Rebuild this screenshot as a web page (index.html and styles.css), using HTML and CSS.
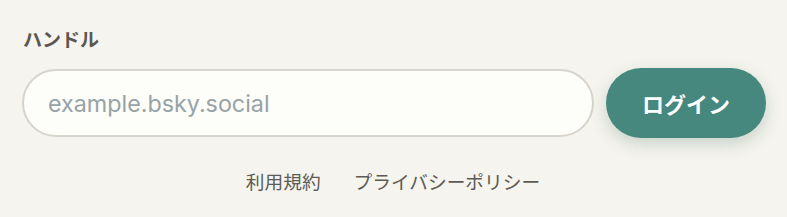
FILE: index.html
```html
<!DOCTYPE html>
<html lang="ja">
<head>
<meta charset="utf-8">
<link rel="stylesheet" href="styles.css">
</head>
<body>
<div class="wrap">
  <label class="label" for="handle">ハンドル</label>
  <div class="row">
    <input id="handle" class="input" type="text" placeholder="example.bsky.social">
    <button class="btn">ログイン</button>
  </div>
  <div class="links">
    <a href="#">利用規約</a>
    <a href="#">プライバシーポリシー</a>
  </div>
</div>
</body>
</html>
```
FILE: styles.css
```css
html, body {
  margin: 0;
  padding: 0;
  background: #f5f4ee;
}
body {
  font-family: Inter, "Noto Sans CJK JP", sans-serif;
}
.wrap {
  padding: 28px 21px 0 22px;
  display: flex;
  flex-direction: column;
}
.label {
  font-size: 19px;
  font-weight: 700;
  color: #5b5651;
  padding-left: 1px;
  line-height: 26px;
  margin-bottom: 14px;
}
.row {
  display: flex;
  gap: 12px;
  align-items: center;
}
.input {
  flex: 1;
  height: 68px;
  box-sizing: border-box;
  border: 2px solid #d6d4cd;
  border-radius: 34px;
  background: #fdfdf9;
  padding: 0 24px;
  font-family: Inter, sans-serif;
  font-size: 23.3px;
  color: #333;
  outline: none;
}
.input::placeholder {
  color: #97a3a6;
}
.btn {
  width: 160px;
  height: 70px;
  border: none;
  border-radius: 35px;
  background: #46877e;
  color: #fff;
  font-family: Inter, "Noto Sans CJK JP", sans-serif;
  font-size: 22px;
  font-weight: 700;
  box-shadow: 0 6px 16px rgba(70, 110, 100, 0.25);
}
.links {
  display: flex;
  justify-content: center;
  gap: 33px;
  margin-top: 32px;
  padding-right: 2px;
}
.links a {
  color: #5e5a55;
  text-decoration: none;
  font-size: 18.7px;
  line-height: 26px;
}
```
